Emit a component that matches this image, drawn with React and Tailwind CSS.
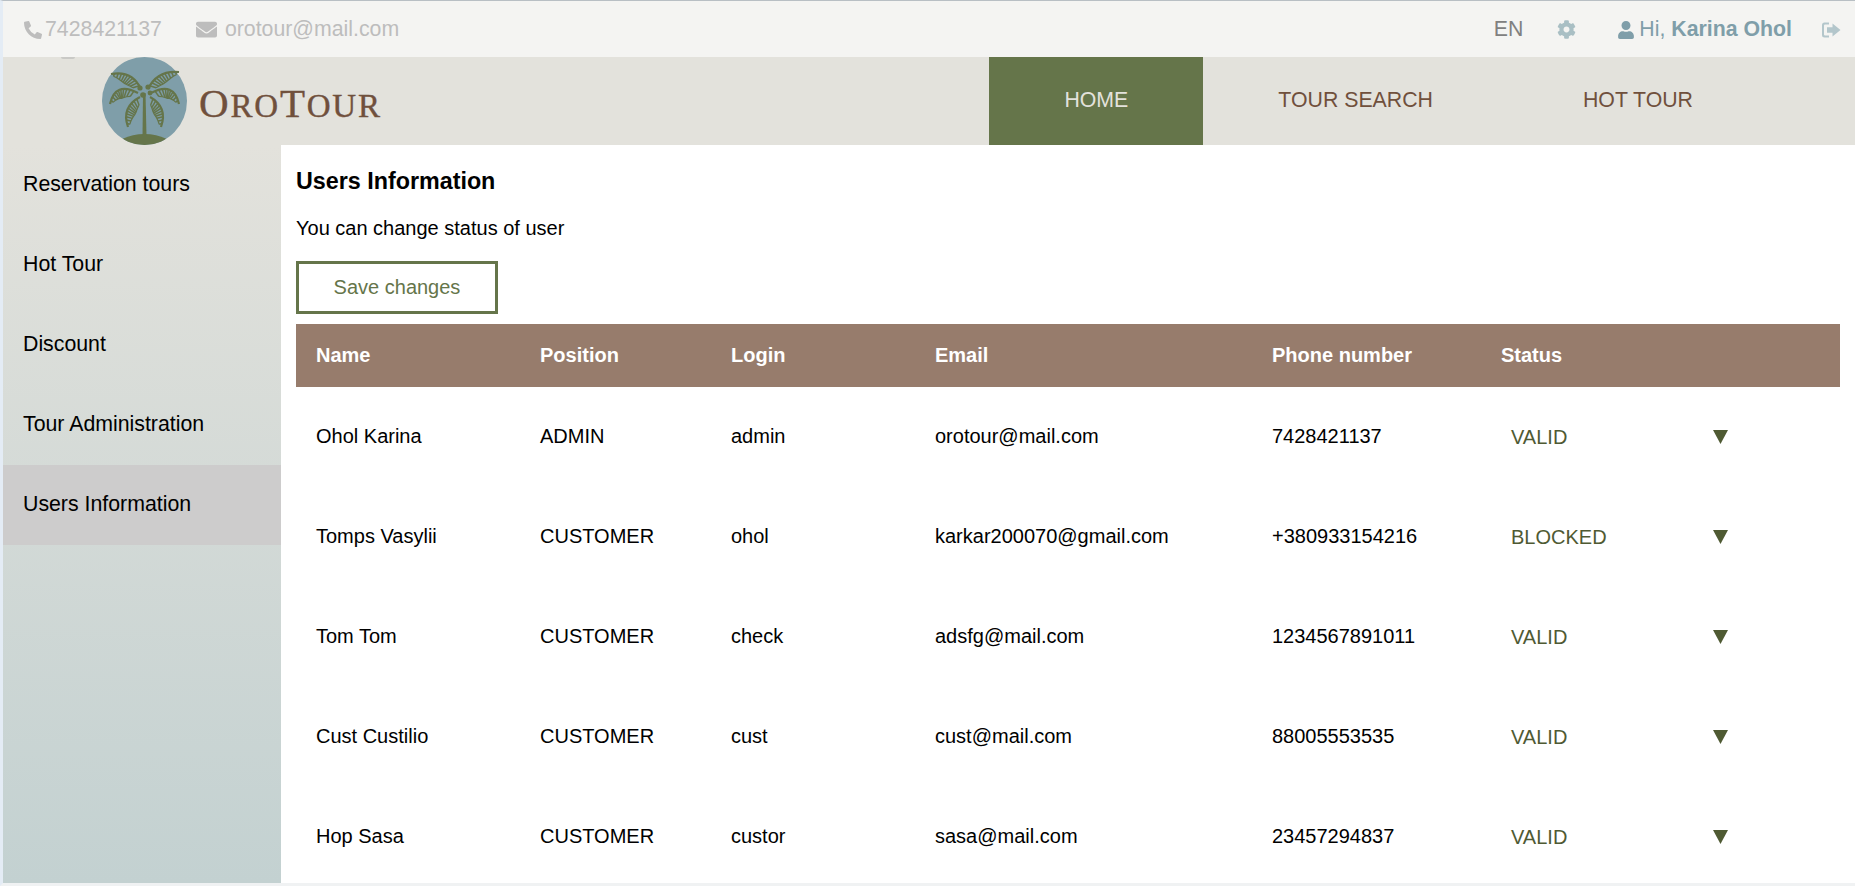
import { FaPhoneAlt, FaEnvelope, FaCog, FaUser } from "react-icons/fa"

const users = [
  { name: "Ohol Karina", position: "ADMIN", login: "admin", email: "orotour@mail.com", phone: "7428421137", status: "VALID" },
  { name: "Tomps Vasylii", position: "CUSTOMER", login: "ohol", email: "karkar200070@gmail.com", phone: "+380933154216", status: "BLOCKED" },
  { name: "Tom Tom", position: "CUSTOMER", login: "check", email: "adsfg@mail.com", phone: "1234567891011", status: "VALID" },
  { name: "Cust Custilio", position: "CUSTOMER", login: "cust", email: "cust@mail.com", phone: "88005553535", status: "VALID" },
  { name: "Hop Sasa", position: "CUSTOMER", login: "custor", email: "sasa@mail.com", phone: "23457294837", status: "VALID" },
]

const menu = ["Reservation tours", "Hot Tour", "Discount", "Tour Administration", "Users Information"]

// one palm leaf: a curved spine with ribs hanging off one side
function Frond({ from, ctrl, to, side = 1 }) {
  const ribs = []
  const steps = 10
  let edge = ""
  for (let i = 1; i <= steps; i++) {
    const t = i / (steps + 1)
    const x = (1 - t) * (1 - t) * from[0] + 2 * t * (1 - t) * ctrl[0] + t * t * to[0]
    const y = (1 - t) * (1 - t) * from[1] + 2 * t * (1 - t) * ctrl[1] + t * t * to[1]
    const dx = 2 * (1 - t) * (ctrl[0] - from[0]) + 2 * t * (to[0] - ctrl[0])
    const dy = 2 * (1 - t) * (ctrl[1] - from[1]) + 2 * t * (to[1] - ctrl[1])
    const len = Math.hypot(dx, dy)
    const size = 9 * Math.sin(Math.PI * (0.18 + t * 0.8))
    const nx = (-dy / len) * side * size
    const ny = (dx / len) * side * size
    const ex = x + nx + (dx / len) * 1.5
    const ey = y + ny + (dy / len) * 1.5
    edge += `${i === 1 ? "M" : "L"}${ex} ${ey} `
    ribs.push(<line key={i} x1={x} y1={y} x2={ex} y2={ey} stroke="#65754a" strokeWidth="1.5" />)
  }
  return (
    <g>
      <path
        d={`M${from[0]} ${from[1]} Q${ctrl[0]} ${ctrl[1]} ${to[0]} ${to[1]}`}
        fill="none"
        stroke="#65754a"
        strokeWidth="2.2"
      />
      <path d={edge} fill="none" stroke="#65754a" strokeWidth="1.2" />
      {ribs}
    </g>
  )
}

function PalmLogo() {
  return (
    <svg width="85" height="88" viewBox="0 0 85 88" className="shrink-0">
      <defs>
        <clipPath id="badge">
          <ellipse cx="42.5" cy="44" rx="42.5" ry="44" />
        </clipPath>
      </defs>
      <ellipse cx="42.5" cy="44" rx="42.5" ry="44" fill="#7f9ea9" />
      <g clipPath="url(#badge)">
        <ellipse cx="42.5" cy="92" rx="30" ry="15" fill="#65754a" />
      </g>
      <path d="M41 36 L40.5 79 L44.5 79 L43.5 36 Z" fill="#65754a" />
      <Frond from={[39, 32]} ctrl={[30, 13]} to={[9, 17]} side={-1} />
      <Frond from={[46, 32]} ctrl={[55, 13]} to={[77, 15]} side={1} />
      <Frond from={[36, 36]} ctrl={[13, 24]} to={[8, 47]} side={-1} />
      <Frond from={[49, 36]} ctrl={[72, 24]} to={[77, 47]} side={1} />
      <Frond from={[38, 40]} ctrl={[19, 50]} to={[26, 70]} side={-1} />
      <Frond from={[48, 40]} ctrl={[66, 50]} to={[59, 70]} side={1} />
      <circle cx="38" cy="31" r="2.6" fill="#65754a" />
      <circle cx="46" cy="30" r="2.6" fill="#65754a" />
      <circle cx="41" cy="38" r="2.8" fill="#65754a" />
      <circle cx="48" cy="36" r="2.4" fill="#65754a" />
    </svg>
  )
}

function SignOutIcon() {
  return (
    <svg width="19" height="16" viewBox="0 0 19 16" fill="#b3c6cb">
      <path d="M2.5 0.5H7V2.5H3A1 1 0 0 0 2 3.5V12.5A1 1 0 0 0 3 13.5H7V15.5H2.5A2.5 2.5 0 0 1 0 13V3A2.5 2.5 0 0 1 2.5 0.5Z" />
      <path d="M5 5.2H10.5V1.5L18.5 8L10.5 14.5V10.8H5Z" />
    </svg>
  )
}

function TopBar() {
  return (
    <div className="flex h-14 shrink-0 items-center bg-[#f4f4f2] pl-[21px] pr-[14px] pt-[1px] text-[21.3px]">
      <FaPhoneAlt className="text-[18px] text-[#bdbdbd]" />
      <span className="ml-[3px] text-[#bdbdbd]">7428421137</span>
      <FaEnvelope className="ml-[34px] text-[21px] text-[#bdbdbd]" />
      <span className="ml-[8px] text-[#bdbdbd]">orotour@mail.com</span>

      <span className="ml-auto text-[#808080]">EN</span>
      <FaCog className="ml-[34px] text-[19px] text-[#a9bfc4]" />
      <FaUser className="ml-[41px] text-[18px] text-[#7f9ea9]" />
      <span className="ml-[4px] text-[#7f9ea9]">
        Hi, <b className="font-bold">Karina Ohol</b>
      </span>
      <span className="ml-[30px]">
        <SignOutIcon />
      </span>
    </div>
  )
}

function Header() {
  return (
    <div className="relative flex h-[88px] shrink-0 items-stretch bg-[#e3e2dc] pl-[99px] pr-[87px]">
      <span className="absolute left-[58px] top-0 h-[2px] w-[14px] rounded-b-full bg-[#c9c9c6]" />
      <div className="flex items-center">
        <PalmLogo />
        <span className="ml-[12px] mt-[4px] font-['Liberation_Serif',serif] leading-none tracking-[1.8px] text-[#70503c] uppercase [-webkit-text-stroke:0.4px_#70503c]">
          <span className="text-[41px]">O</span>
          <span className="text-[33px]">ro</span>
          <span className="text-[41px]">T</span>
          <span className="text-[33px]">our</span>
        </span>
      </div>
      <nav className="ml-auto flex items-stretch text-[21.3px]">
        <a className="flex items-center bg-[#65754a] px-[75px] text-[#e3e2dc]">HOME</a>
        <a className="flex items-center px-[75px] text-[#70503c]">TOUR SEARCH</a>
        <a className="flex items-center px-[75px] text-[#70503c]">HOT TOUR</a>
      </nav>
    </div>
  )
}

function Sidebar() {
  return (
    <aside className="w-[278px] shrink-0 bg-gradient-to-b from-[#e3e2dc] to-[#c3d1d1] text-[21.3px] text-black">
      {menu.map((item) => (
        <div
          key={item}
          className={`flex h-20 items-center pl-[20px] ${item === "Users Information" ? "bg-[#cdcccc]" : ""}`}
        >
          {item}
        </div>
      ))}
    </aside>
  )
}

function UsersTable() {
  return (
    <table className="w-[1544px] table-fixed border-collapse text-left text-[20px]">
      <colgroup>
        <col className="w-[224px]" />
        <col className="w-[191px]" />
        <col className="w-[204px]" />
        <col className="w-[337px]" />
        <col className="w-[229px]" />
        <col />
      </colgroup>
      <thead>
        <tr className="h-[63px] bg-[#977c6c] text-white">
          <th className="pb-[2px] pl-5 font-bold">Name</th>
          <th className="pb-[2px] pl-5 font-bold">Position</th>
          <th className="pb-[2px] pl-5 font-bold">Login</th>
          <th className="pb-[2px] pl-5 font-bold">Email</th>
          <th className="pb-[2px] pl-5 font-bold">Phone number</th>
          <th className="pb-[2px] pl-5 font-bold">Status</th>
        </tr>
      </thead>
      <tbody className="text-black">
        {users.map((user) => (
          <tr key={user.login} className="h-[100px]">
            <td className="pb-[2px] pl-5">{user.name}</td>
            <td className="pb-[2px] pl-5">{user.position}</td>
            <td className="pb-[2px] pl-5">{user.login}</td>
            <td className="pb-[2px] pl-5">{user.email}</td>
            <td className="pb-[2px] pl-5">{user.phone}</td>
            <td className="pl-[30px]">
              <div className="flex items-center text-[#4f5a33]">
                <span className="w-[202px]">{user.status}</span>
                <svg width="15" height="14" viewBox="0 0 15 14" fill="#4f5a33">
                  <path d="M0 0H15L7.5 14Z" />
                </svg>
              </div>
            </td>
          </tr>
        ))}
      </tbody>
    </table>
  )
}

function App() {
  return (
    <div className="flex h-[886px] flex-col overflow-hidden border-t-[1px] border-b-[3px] border-l-[3px] border-t-[#b8bfc4] border-b-[#f0f2f3] border-l-[#e4ecf5] bg-white font-['Liberation_Sans',sans-serif]">
      <TopBar />
      <Header />
      <div className="flex min-h-0 flex-1">
        <Sidebar />
        <main className="min-w-0 flex-1 overflow-hidden pl-[15px]">
          <h2 className="mt-[23px] text-[23.3px] font-bold leading-[26px] text-black">Users Information</h2>
          <p className="mt-[23px] text-[20px] leading-[23px] text-black">You can change status of user</p>
          <button className="mt-[21px] block h-[53px] w-[202px] border-[3px] border-[#65754a] bg-white pb-[1px] text-[20px] text-[#65754a]">
            Save changes
          </button>
          <div className="mt-[10px]">
            <UsersTable />
          </div>
        </main>
      </div>
    </div>
  )
}

export default App
